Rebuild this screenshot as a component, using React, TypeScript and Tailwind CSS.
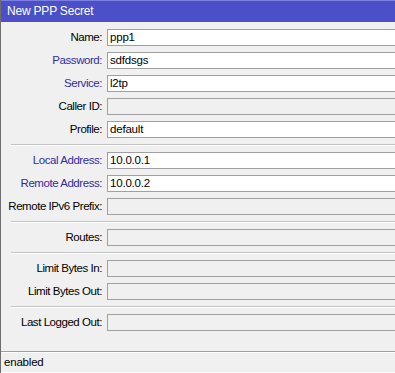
const rows: (
  | { kind: "field"; label: string; value?: string; blue?: boolean; filled?: boolean }
  | { kind: "sep" }
)[] = [
  { kind: "field", label: "Name:", value: "ppp1", filled: true },
  { kind: "field", label: "Password:", value: "sdfdsgs", blue: true, filled: true },
  { kind: "field", label: "Service:", value: "l2tp", blue: true, filled: true },
  { kind: "field", label: "Caller ID:" },
  { kind: "field", label: "Profile:", value: "default", filled: true },
  { kind: "sep" },
  { kind: "field", label: "Local Address:", value: "10.0.0.1", blue: true, filled: true },
  { kind: "field", label: "Remote Address:", value: "10.0.0.2", blue: true, filled: true },
  { kind: "field", label: "Remote IPv6 Prefix:" },
  { kind: "sep" },
  { kind: "field", label: "Routes:" },
  { kind: "sep" },
  { kind: "field", label: "Limit Bytes In:" },
  { kind: "field", label: "Limit Bytes Out:" },
  { kind: "sep" },
  { kind: "field", label: "Last Logged Out:" },
];

export default function App() {
  return (
    <div
      className="w-[395px] h-[373px] overflow-hidden bg-[#f0f0f0] text-[11.5px] tracking-[-0.45px] text-black flex flex-col border-l border-[#6e6e6e]"
      style={{ fontFamily: '"Liberation Sans", Arial, sans-serif' }}
    >
      {/* title bar */}
      <div className="h-[22px] shrink-0 bg-[#4b50c9] border-t border-[#7a7fe0] text-white text-[12px] tracking-[-0.2px] leading-[21px] pl-[6px]">
        New PPP Secret
      </div>

      <div className="flex flex-col pt-[7px]">
        {rows.map((r, i) =>
          r.kind === "sep" ? (
            <div key={i} className="ml-[10px] mb-[6px] h-[2px] border-t border-[#c4c4c4] border-b border-b-white" />
          ) : (
            <div key={i} className="flex items-center h-[17px] mb-[6px]">
              <div
                className={`w-[102px] shrink-0 text-right pr-[1px] leading-[17px] whitespace-nowrap ${
                  r.blue ? "text-[#2e2ea5]" : "text-black"
                }`}
              >
                {r.label}
              </div>
              <div
                className={`ml-[4px] flex-1 h-[17px] border border-[#a0a0a0] border-r-0 pl-[2px] leading-[15px] tracking-[-0.2px] ${
                  r.filled ? "bg-white" : "bg-[#f0f0f0]"
                }`}
              >
                {r.value}
              </div>
            </div>
          )
        )}
      </div>

      {/* status bar */}
      <div className="mt-[14px] h-[22px] border-t border-[#a0a0a0] border-b border-b-white">
        <div className="h-full border-t border-white pl-[3px] leading-[19px] tracking-[-0.2px]">enabled</div>
      </div>
    </div>
  );
}
